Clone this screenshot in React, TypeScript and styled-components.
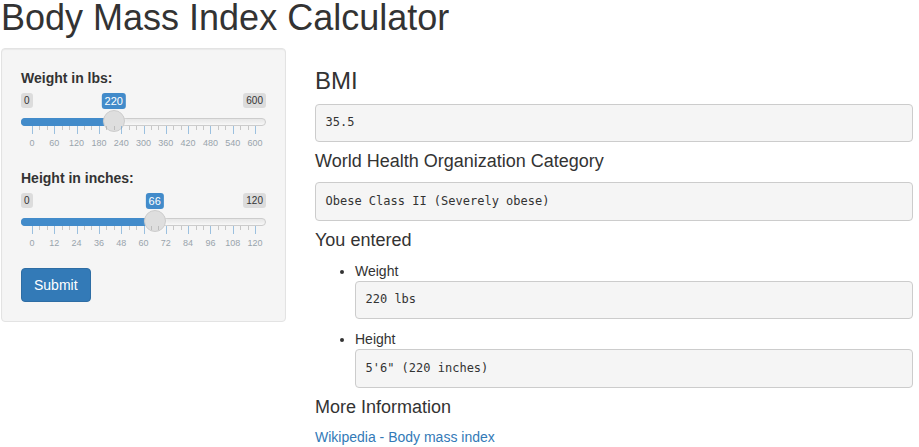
import React from "react";
import styled, { createGlobalStyle } from "styled-components";

const GlobalStyle = createGlobalStyle`
  * { box-sizing: border-box; }
  html, body { margin: 0; padding: 0; background: #fff; }
  body {
    font-family: "Liberation Sans", Arial, Helvetica, sans-serif;
    font-size: 14px;
    line-height: 1.42857143;
    color: #333;
    overflow: hidden;
  }
`;

const Page = styled.div`
  display: flex;
  flex-direction: column;
  gap: 10px;
  width: 919px;
  padding-left: 1px;
`;

const Title = styled.h2`
  font-size: 36px;
  font-weight: 500;
  line-height: 1.1;
  margin: -2px 0 0;
`;

const Row = styled.div`
  display: flex;
  align-items: flex-start;
  gap: 29px;
`;

const Well = styled.form`
  display: flex;
  flex-direction: column;
  align-items: flex-start;
  gap: 15px;
  width: 285px;
  flex-shrink: 0;
  margin: 0;
  padding: 19px;
  background: #f5f5f5;
  border: 1px solid #e3e3e3;
  border-radius: 4px;
  box-shadow: inset 0 1px 1px rgba(0, 0, 0, 0.05);
`;

const FormGroup = styled.div`
  display: flex;
  flex-direction: column;
  align-items: stretch;
  gap: 5px;
  align-self: stretch;
`;

const Label = styled.label`
  align-self: flex-start;
  font-weight: 700;
`;

/* ---- ion.rangeSlider (shiny skin) ---- */
const Irs = styled.div`
  position: relative;
  height: 60px;
  font-family: "Liberation Sans", Arial, sans-serif;
`;

const Line = styled.span`
  position: absolute;
  left: 0;
  right: 0;
  top: 25px;
  height: 8px;
  border: 1px solid #ccc;
  border-radius: 16px;
  background: linear-gradient(to bottom, #dedede -50%, #fff 150%);
`;

const Bar = styled.span`
  position: absolute;
  left: 0;
  top: 25px;
  height: 8px;
  background: #428bca;
  border: 1px solid #428bca;
  border-right: 0;
  border-radius: 16px 0 0 16px;
`;

const Handle = styled.span`
  position: absolute;
  top: 17px;
  width: 22px;
  height: 22px;
  border: 1px solid #ccc;
  background: #dedede;
  border-radius: 27px;
  box-shadow: 1px 1px 3px rgba(255, 255, 255, 0.3);
`;

const EdgeLabel = styled.span<{ $side: "left" | "right" }>`
  position: absolute;
  top: 0;
  ${(p) => (p.$side === "left" ? "left: 0;" : "right: 0;")}
  font-size: 10px;
  line-height: 1.333;
  padding: 1px 3px;
  color: #333;
  background: rgba(0, 0, 0, 0.1);
  border-radius: 3px;
`;

const Single = styled.span`
  position: absolute;
  top: 0;
  transform: translateX(-50%);
  font-size: 11px;
  line-height: 1.333;
  padding: 1px 3px;
  color: #fff;
  background: #428bca;
  border-radius: 3px;
  white-space: nowrap;
`;

const Grid = styled.div`
  position: absolute;
  left: 11px;
  right: 11px;
  bottom: 0;
  height: 27px;
`;

const GridPol = styled.span<{ $small?: boolean }>`
  position: absolute;
  top: 0;
  width: 1px;
  height: ${(p) => (p.$small ? 4 : 8)}px;
  background: ${(p) => (p.$small ? "#999" : "#428bca")};
  opacity: 0.5;
`;

const GridText = styled.span`
  position: absolute;
  bottom: 5px;
  transform: translateX(-50%);
  padding: 0 3px;
  font-size: 9px;
  line-height: 9px;
  color: #99a4ac;
  white-space: nowrap;
`;

type SliderProps = { min: number; max: number; value: number; step: number };

const Slider: React.FC<SliderProps> = ({ min, max, value, step }) => {
  const frac = (value - min) / (max - min);
  const center = `calc(11px + (100% - 22px) * ${frac})`;
  const bigNum = Math.round((max - min) / step);
  const smallMax = bigNum > 28 ? 0 : bigNum > 14 ? 1 : bigNum > 7 ? 2 : bigNum > 4 ? 3 : 4;
  const pols: React.ReactNode[] = [];
  for (let i = 0; i <= bigNum; i++) {
    const bigW = (100 / bigNum) * i;
    if (i > 0) {
      const smallW = 100 / bigNum / (smallMax + 1);
      for (let z = 1; z <= smallMax; z++) {
        pols.push(<GridPol key={`s${i}-${z}`} $small style={{ left: `${bigW - smallW * z}%` }} />);
      }
    }
    pols.push(<GridPol key={`b${i}`} style={{ left: `${bigW}%` }} />);
    pols.push(
      <GridText key={`t${i}`} style={{ left: `${bigW}%` }}>
        {min + step * i}
      </GridText>
    );
  }
  return (
    <Irs>
      <Line />
      <Bar style={{ width: center }} />
      <EdgeLabel $side="left">{min}</EdgeLabel>
      <EdgeLabel $side="right">{max}</EdgeLabel>
      <Single style={{ left: center }}>{value}</Single>
      <Handle style={{ left: `calc((100% - 22px) * ${frac})` }} />
      <Grid>{pols}</Grid>
    </Irs>
  );
};

const SubmitButton = styled.button`
  margin: 0;
  padding: 6px 12px;
  font-family: inherit;
  font-size: 14px;
  line-height: 1.42857143;
  color: #fff;
  background: #337ab7;
  border: 1px solid #2e6da4;
  border-radius: 4px;
  cursor: pointer;
`;

/* ---- main panel ---- */
const Main = styled.div`
  display: flex;
  flex-direction: column;
  align-items: stretch;
  gap: 10px;
  width: 598px;
  flex-shrink: 0;
  padding-top: 20px;
`;

const H3 = styled.h3`
  font-size: 24px;
  font-weight: 500;
  line-height: 1.1;
  margin: 0;
`;

const H4 = styled.h4`
  font-size: 18px;
  font-weight: 500;
  line-height: 1.1;
  margin: 0;
`;

const Pre = styled.pre`
  margin: 0;
  padding: 9.5px;
  font-family: "DejaVu Sans Mono", "Liberation Mono", monospace;
  font-size: 12px;
  line-height: 17.5px;
  color: #333;
  background: #f5f5f5;
  border: 1px solid #ccc;
  border-radius: 4px;
  white-space: pre-wrap;
`;

const List = styled.ul`
  margin: 0;
  padding-left: 40px;
`;

const Item = styled.li`
  & + & {
    margin-top: 10px;
  }
`;

const Link = styled.a`
  align-self: flex-start;
  color: #337ab7;
  text-decoration: none;
`;

export default function App() {
  return (
    <>
      <GlobalStyle />
      <Page>
        <Title>Body Mass Index Calculator</Title>
        <Row>
          <Well onSubmit={(e) => e.preventDefault()}>
            <FormGroup>
              <Label>Weight in lbs:</Label>
              <Slider min={0} max={600} value={220} step={60} />
            </FormGroup>
            <FormGroup>
              <Label>Height in inches:</Label>
              <Slider min={0} max={120} value={66} step={12} />
            </FormGroup>
            <SubmitButton type="submit">Submit</SubmitButton>
          </Well>
          <Main>
            <H3>BMI</H3>
            <Pre>35.5</Pre>
            <H4>World Health Organization Category</H4>
            <Pre>Obese Class II (Severely obese)</Pre>
            <H4>You entered</H4>
            <List>
              <Item>
                Weight
                <Pre>220 lbs</Pre>
              </Item>
              <Item>
                Height
                <Pre>5'6" (220 inches)</Pre>
              </Item>
            </List>
            <H4>More Information</H4>
            <Link href="#">Wikipedia - Body mass index</Link>
          </Main>
        </Row>
      </Page>
    </>
  );
}
